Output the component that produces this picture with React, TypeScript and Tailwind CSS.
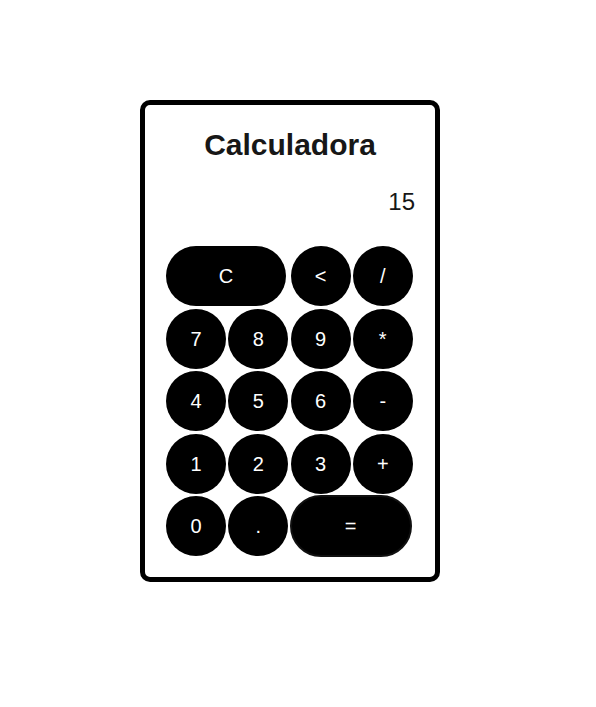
import { useState } from "react";

const keys = ["C", "<", "/", "7", "8", "9", "*", "4", "5", "6", "-", "1", "2", "3", "+", "0", ".", "="];

function evaluate(expression: string): string {
  const tokens = expression.match(/\d+\.?\d*|\.\d+|[-+*/]/g) ?? [];
  const terms: number[] = [];
  let operator = "+";
  for (const token of tokens) {
    if (/^[-+*/]$/.test(token)) {
      operator = token;
      continue;
    }
    const value = Number(token);
    if (operator === "+") terms.push(value);
    else if (operator === "-") terms.push(-value);
    else {
      const left = terms.pop() ?? 0;
      terms.push(operator === "*" ? left * value : left / value);
    }
  }
  return terms.length ? String(terms.reduce((sum, term) => sum + term, 0)) : "";
}

function keyStyle(key: string) {
  if (key === "C") return "col-span-2 h-[60px] w-[120px]";
  if (key === "=") return "col-span-2 -m-px h-[62px] w-[122px] border-2 border-[#101010]";
  return "h-[60px] w-[60px]";
}

export default function App() {
  const [display, setDisplay] = useState("15");

  function press(key: string) {
    if (key === "C") setDisplay("");
    else if (key === "<") setDisplay(display.slice(0, -1));
    else if (key === "=") setDisplay(evaluate(display));
    else setDisplay(display + key);
  }

  return (
    <main className="flex min-h-screen items-start justify-center bg-white py-[100px] pr-4 font-['Liberation_Sans',Arial,sans-serif] text-[#171717]">
      <section className="w-full max-w-[300px] rounded-[10px] border-[5px] border-black px-5 pt-5 pb-[18px]">
        <h1 className="text-center text-[30px] leading-10 font-bold">Calculadora</h1>
        <input
          aria-label="Resultado"
          readOnly
          value={display}
          className="mt-4 mb-6 block h-[41px] w-full bg-transparent text-right text-2xl outline-none"
        />
        <div className="ml-px grid h-[313px] w-[249px] grid-cols-4 grid-rows-5">
          {keys.map((key) => (
            <button
              key={key}
              type="button"
              onClick={() => press(key)}
              className={`cursor-pointer rounded-full bg-black text-center text-xl text-white ${keyStyle(key)}`}
            >
              {key}
            </button>
          ))}
        </div>
      </section>
    </main>
  );
}
